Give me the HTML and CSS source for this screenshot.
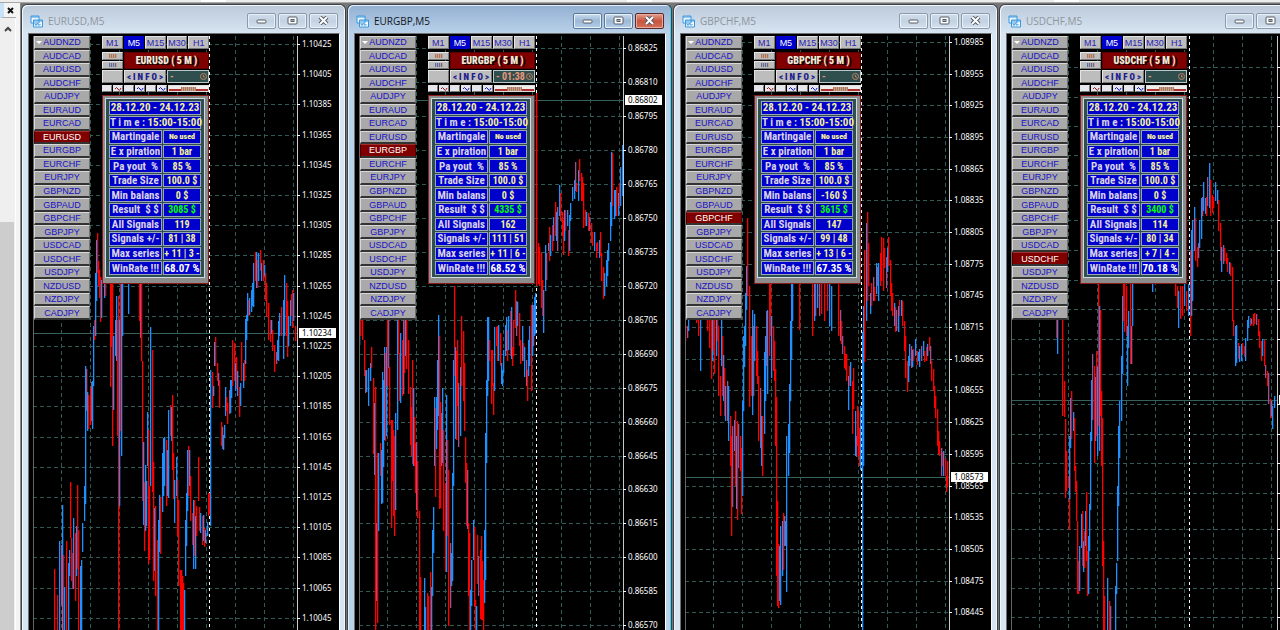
FILE: index.html
```html
<!DOCTYPE html>
<html lang="en">
<head>
    <meta charset="UTF-8" />
    <meta name="viewport" content="width=device-width, initial-scale=1.0" />
    <title>EURGBP,M5</title>
    <link rel="stylesheet" href="styles.css">
</head>
<body>
    <div class="topbar">
        <span class="tab"></span>
        <span class="tab"></span>
        <span class="tab"></span>
    </div>
    <div class="main">
        <div class="sidebar">
            <div class="sidebar-head">
                <button type="button" class="close-panel" aria-label="Close panel">
                    <svg width="7" height="7" viewBox="0 0 7 7"><path d="M1 1l5 5M6 1l-5 5" stroke="#111" stroke-width="2" /></svg>
                </button>
            </div>
            <div class="scrollbar">
                <button type="button" class="scroll-up" aria-label="Scroll up">
                    <svg width="8" height="6" viewBox="0 0 8 6"><path d="M1 5l3-3 3 3" fill="none" stroke="#444" stroke-width="2" /></svg>
                </button>
                <div class="scroll-thumb"></div>
            </div>
        </div>
        <div class="desktop" id="desktop"></div>
    </div>
    <script src="script.js"></script>
</body>
</html>
```
FILE: styles.css
```css
body {
  margin: 0;
  height: 100vh;
  overflow: hidden;
  display: flex;
  flex-direction: column;
  font-family: "Liberation Sans", Arial, sans-serif;
  background-color: #f0f0f0;
}

button {
  margin: 0;
  padding: 0;
  border: none;
  font-family: inherit;
  cursor: pointer;
}

.topbar {
  display: flex;
  justify-content: space-around;
  height: 2px;
  background-color: #ededed;
  border-bottom: 1px solid #a8a8a8;
}

.tab {
  width: 25px;
  background-color: #fff;
}

.main {
  display: flex;
  flex: 1;
  min-height: 0;
}

/* left strip */
.sidebar {
  display: flex;
  flex-direction: column;
  flex: 0 0 20px;
  background-color: #f4f4f4;
  border-right: 1px solid #8a8a8a;
}

.sidebar-head {
  display: flex;
  justify-content: flex-end;
  height: 15px;
  width: 16px;
  border-left: 4px solid #c9e2f7;
  border-bottom: 1px solid #aaa;
  box-sizing: border-box;
}

.close-panel {
  display: flex;
  align-items: center;
  margin-right: 2px;
  background: none;
}

.scrollbar {
  display: flex;
  flex-direction: column;
  flex: 1;
  width: 15px;
  border-right: 1px solid #fff;
  background-color: #efefef;
}

.scroll-up {
  height: 18px;
  background: none;
}

.scroll-thumb {
  flex: 1;
  margin: 186px 1px 0 0;
  background-color: #cdcdcd;
}

/* chart windows */
.desktop {
  display: flex;
  gap: 1px;
  flex: 1;
  min-width: 0;
  overflow: hidden;
  background-color: #777;
}

.window {
  display: flex;
  flex-direction: column;
  flex: 0 0 325px;
  box-sizing: border-box;
  margin-top: 1px;
  padding: 0 5px;
  border: 1px solid #3c4248;
  border-bottom: none;
  border-radius: 6px 6px 0 0;
  background: linear-gradient(#bccada, #d7e4f2 28px);
  box-shadow: inset 1px 1px 0 #f2f7fc, inset -1px 0 0 #f2f7fc;
}

.window.active {
  background: linear-gradient(#93b0d2, #b9d1ea 28px);
  box-shadow: inset 1px 1px 0 #e3effb, inset -1px 0 0 #38d5f2;
}

.titlebar {
  display: flex;
  align-items: center;
  flex: 0 0 28px;
  padding: 0 2px 0 3px;
  gap: 5px;
}

.titlebar h1 {
  flex: 1;
  margin: 0;
  padding-top: 4px;
  font-family: "Open Sans", "Noto Sans", sans-serif;
  font-size: 10px;
  font-weight: normal;
  color: #8e959c;
}

.window.active h1 {
  color: #10151a;
}

.title-icon {
  display: block;
  margin-top: 4px;
}

.window-buttons {
  display: flex;
  gap: 2px;
  padding-top: 3px;
}

.window-buttons button {
  display: flex;
  align-items: center;
  justify-content: center;
  width: 29px;
  height: 16px;
  border: 1px solid #8b9bab;
  border-radius: 2px;
  background: linear-gradient(#cfdcea, #c3d2e2 50%, #d3e1ef);
  box-shadow: inset 0 0 0 1px #e8f0f8;
}

.window.active .window-buttons button {
  border-color: #5b7899;
  background: linear-gradient(#cbdcee, #9bb8d6 50%, #b6d0ea);
}

.window.active .window-buttons .close {
  border-color: #5c2a26;
  background: linear-gradient(#e5a193, #c9543c 50%, #d3705a);
  box-shadow: inset 0 0 0 1px #e7ac9f;
}

.client {
  position: relative;
  flex: 1;
  min-height: 0;
  overflow: hidden;
  box-sizing: border-box;
  margin-left: 1px;
  padding: 2px 0 0 5px;
  border: 1px solid #707070;
  border-right-color: #fff;
  border-bottom: none;
  background-color: #000;
}

.chart {
  position: absolute;
  top: 2px;
  left: 4px;
  font-family: "Noto Sans", "Open Sans", sans-serif;
  font-size: 8px;
}

.overlay {
  position: relative;
  display: flex;
  gap: 12px;
}

/* symbol buttons */
.pairs {
  display: grid;
  grid-auto-rows: 1fr;
  width: 56px;
  height: 284px;
}

.pairs button {
  border: 1px solid #d8d8d8;
  border-right-color: #707070;
  border-bottom: 2px solid #333;
  background-color: #a9a9a9;
  color: #1a12c4;
  font-size: 9px;
  line-height: 10px;
}

.pairs button.selected {
  border-color: #a03030 #500000 #333;
  background-color: #800000;
  color: #fff;
}

.pairs button:first-child::before {
  content: "";
  float: left;
  margin: 4px -7px 0 1px;
  border: 3px solid transparent;
  border-top-color: #fff;
  border-bottom: none;
}

.controls {
  width: 107px;
}

.row {
  display: flex;
  gap: 1px;
}

.key {
  box-sizing: border-box;
  border: 1px solid #e4e4e4;
  border-right-color: #777;
  border-bottom-color: #777;
  background-color: #bdbdbd;
  color: #1c1c8c;
}

.timeframes {
  margin-bottom: 3px;
}

.timeframes .key {
  flex: 1 1 0;
  height: 13px;
  font-size: 9px;
  color: #2a22b8;
}

.timeframes .on {
  border-color: #0000cd;
  background-color: #0000cd;
  color: #fff;
}

.side-keys {
  display: flex;
  flex-direction: column;
  gap: 1px;
  width: 21px;
}

.side-keys .key {
  display: flex;
  align-items: center;
  justify-content: center;
  height: 8px;
}

.bars {
  display: block;
  width: 8px;
  height: 4px;
  background: repeating-linear-gradient(90deg, #c07040 0 1px, #b0a8a8 1px 2px);
}

.side-keys .key:last-child .bars {
  background: repeating-linear-gradient(90deg, #5070b0 0 1px, #c0a090 1px 2px);
}

.symbol {
  flex: 1;
  height: 17px;
  box-sizing: border-box;
  border: 1px solid #5a0000;
  background-color: #800000;
  color: #f4e8d8;
  font-family: "Roboto Condensed", Roboto, sans-serif;
  font-size: 10px;
  font-weight: 900;
  line-height: 16px;
  text-align: center;
  text-shadow: 2px 1px 0 #000;
}

.info-row {
  margin: 1px 0 2px;
}

.info-row .key {
  width: 21px;
  height: 13px;
}

.info-row .info {
  width: 42px;
  font-family: "Roboto Condensed", Roboto, sans-serif;
  font-size: 9px;
  font-weight: 900;
}

.timer {
  display: flex;
  align-items: center;
  justify-content: space-between;
  flex: 1;
  height: 13px;
  box-sizing: border-box;
  padding: 0 1px 0 2px;
  border: 1px solid #b8c8c8;
  background-color: #2f4f4f;
  color: #e9967a;
  font-family: "Roboto Condensed", Roboto, sans-serif;
  font-size: 10px;
  font-weight: bold;
}

.tools .key {
  flex: none;
  width: 10px;
  height: 7px;
  background-color: #e6e6ee;
}

.tools .key svg {
  display: block;
}

.tools .slider {
  display: flex;
  align-items: center;
  justify-content: center;
  flex: 1;
  height: 7px;
  box-sizing: border-box;
  border: 1px solid #ddd;
  background: linear-gradient(#eee 3px, #b03030 3px);
}

.tools .slider .bars {
  width: 15px;
}

/* statistics panel */
.panel {
  margin-top: 3px;
  border: 1px solid #8b1a1a;
  background-color: #8c8c8c;
  padding: 2px 3px 5px 2px;
}

.stats {
  width: 100%;
  height: 180px;
  table-layout: fixed;
  border: 1px solid #d3dbe2;
  border-spacing: 1px;
  padding: 1px 2px;
  background-color: #2f4f4f;
  font-family: "Roboto Condensed", Roboto, sans-serif;
  font-size: 10px;
  font-weight: bold;
  line-height: 11px;
  color: #f3ee9e;
}

.stats th,
.stats td {
  padding: 0;
  border: 1px solid #9aa4b8;
  background-color: #0000cd;
  text-align: center;
  white-space: nowrap;
}

.stats th {
  color: #d9d3ea;
  font-size: 11px;
}

.stats .label-col {
  width: 53px;
}

.stats .small {
  font-size: 8px;
  font-weight: 900;
}

.stats .range,
.stats .winrate {
  font-size: 11px;
}

.stats .label {
  color: #d9d3ea;
}

.stats .result {
  color: #00ff00;
}

.stats .winrate {
  color: #fff;
}
```
FILE: script.js
```js
var PAIRS = ["AUDNZD", "AUDCAD", "AUDUSD", "AUDCHF", "AUDJPY", "EURAUD", "EURCAD",
  "EURUSD", "EURGBP", "EURCHF", "EURJPY", "GBPNZD", "GBPAUD", "GBPCHF", "GBPJPY",
  "USDCAD", "USDCHF", "USDJPY", "NZDUSD", "NZDJPY", "CADJPY"];

var COLORS = { b: "#1e90ff", r: "#ff0000", p: "#a0508c" };

// bars: x, colour, top-bottom
var charts = [
  {
    pair: "EURUSD", start: 1.10425, step: 0.0002, first: 8, pitch: 30.2, count: 20,
    price: "1.10234", priceY: 297, divider: 176, timer: "",
    stats: ["0 $", "3085 $", "119", "81 | 38", "+ 11 | 3 -", "68.07 %"],
    bars: "21r533-594 24r559-594 26b505-594 28p509-569 29b469-594 30r519-594 31b551-594 33r505-594 35b527-594 36b514-540 37r446-502 38r502-545 39r517-553 40b482-553 42r497-565 43b490-540 44r449-533 45r494-594 47b530-594 48b524-594 49b487-516 51b450-485 52b330-468 53p333-375 54b356-395 55r359-393 57r352-389 58p346-385 59b345-393 60b290-350 61r284-304 62b237-300 63b204-265 64r197-237 65r225-250 66r234-262 67r241-286 68b244-282 71b244-262 72r246-260 77r248-351 78r248-310 79r248-410 80b300-374 82b284-320 83b260-325 84r284-400 85r260-594 86b284-470 87r248-395 88b248-420 89b248-300 95b248-278 106r248-285 107p248-302 108r248-325 109r325-465 110b406-489 111r446-515 112b429-495 113b445-490 114b376-430 115r394-528 116r450-524 117b291-450 119r314-456 120r426-545 121b472-535 122r470-560 124r504-594 125b484-594 126b459-516 127r461-518 129b417-476 130b402-460 131b401-450 133r404-470 134b414-460 135b374-462 137r369-400 138b371-405 139r359-434 140r417-463 141b444-487 143b421-460 144r444-500 145r464-550 147r534-594 148r534-594 149r540-594 150r547-594 151b554-594 152b484-540 153b457-510 154b414-475 155r410-460 156b414-450 157r440-485 159r477-509 160b464-533 161r464-520 162b480-533 163r470-500 165r421-465 166r471-495 167b477-497 169r480-509 170b479-505 171r492-511 172b494-507 174b486-500 175r457-480 176r457-478 177b334-490 179r336-372 180b350-360 181b306-330 182r301-330 184r327-345 185p337-350 186r344-372 188r386-410 189p391-413 190b399-414 191b389-402 192b351-380 193r361-375 194r367-388 196p354-378 197b344-377 198b344-362 199r304-350 201r307-345 202b327-355 203r321-353 204b335-360 206r351-381 207b347-370 208r306-345 210b327-352 211r324-345 212b283-328 213b279-304 214b257-285 215r264-280 216b262-279 218b254-276 219b247-270 220b227-271 222r216-245 223b216-252 224r224-252 225b217-245 227r214-235 228b227-245 230r224-245 231b229-240 232r237-265 233r247-281 235r267-304 237r284-306 238b284-298 239r294-315 241r309-336 243p316-328 244b304-324 245b285-325 246b277-300 248r271-300 250b264-323 251b239-300 253r247-300 254r265-321 255b280-310 257b264-290 258r258-280 259r254-292 260b257-285 262r290-305"
  },
  {
    pair: "EURGBP", start: 0.86825, step: 0.00015, first: 12, pitch: 33.96, count: 18,
    price: "0.86802", priceY: 64, divider: 177, timer: "01:38", active: true,
    stats: ["0 $", "4335 $", "162", "111 | 51", "+ 11 | 6 -", "68.52 %"],
    bars: "0b277-309 1r283-300 3r280-304 5r304-340 6p334-357 7b334-356 9b332-370 11b327-345 12r311-332 14r342-418 15b367-439 16r351-594 17p487-565 18r417-587 19b417-495 21r407-440 22b414-468 23b336-467 24b344-431 25b311-404 26r317-405 27b311-400 28r270-350 29p284-332 30r331-389 32r384-492 33r384-445 34r394-480 35r400-500 36b377-474 38b270-394 39r284-318 40r317-365 41b297-367 43r304-360 44p284-358 45r270-337 46b270-320 47r270-333 49r304-358 51r351-409 52r371-420 53r324-428 54b352-430 55r381-430 56r407-457 57p406-474 58r425-482 60r475-594 61r541-594 65b542-594 66b571-594 68r557-594 69r560-594 71r536-594 72b551-594 73b494-560 74b471-517 75b361-430 76r372-461 77b361-413 78b324-394 79b279-380 80r300-473 81r366-472 82p377-430 83b352-427 84r394-495 86r447-535 87b359-536 88r404-500 89r434-590 91p507-572 92b517-550 93b437-545 94b324-450 95r250-340 96b311-403 97r315-404 98r304-370 99p347-411 101b331-400 102r280-350 104r295-365 105r327-395 106r401-447 107r427-490 108p434-493 109r487-560 110r497-594 111b554-594 112b524-570 114b484-524 115r491-570 116r564-594 117b570-594 118r499-548 119p520-560 121r514-583 122r500-584 123r525-584 124r544-594 125b494-567 126b397-544 127b344-427 128b281-360 129b281-345 130r304-325 132r314-368 133r314-350 134r347-379 135b291-355 137r291-310 138r290-325 139b289-325 141r297-330 142b327-348 143b334-350 144b314-337 146b289-320 147b281-315 148r294-325 149b280-314 151r275-320 152b271-323 153r311-330 154r284-320 156r254-292 157p265-300 158b266-290 160r277-310 161r304-328 163b290-325 164r307-325 165b311-341 167p324-350 168r334-365 169b304-340 170b290-330 172r269-355 173b269-320 174p269-310 175b261-300 176b257-298 177r57-250 179r207-248 180r211-250 182r217-272 183r244-280 184b254-297 186b209-255 187p217-244 189b207-215 190r191-225 191b199-220 193r189-215 194b181-205 196r166-200 197b176-205 198p171-215 200b149-180 201r157-185 203r176-200 204r184-219 205b174-205 206r174-195 208b174-190 209r194-220 210b179-215 211b167-185 213b151-165 215b144-163 216p126-155 217r147-156 219b134-165 220r123-145 222r137-165 223r141-165 224r147-192 226r174-190 227b176-190 229r177-195 230p181-195 232r187-207 233r196-210 235b196-215 237r207-222 238r206-215 240b204-222 241r196-220 242r217-245 244r231-263 245b237-260 247b224-250 248b214-240 249b207-225 251b166-205 252b116-190 253r117-170 255b154-183 256b154-180 257r151-180 259b157-180 260r147-170 261b131-170 263b109-160"
  },
  {
    pair: "GBPCHF", start: 1.08985, step: 0.0003, first: 6, pitch: 31.68, count: 19,
    price: "1.08573", priceY: 441, divider: 176, timer: "",
    stats: ["-160 $", "3615 $", "147", "99 | 48", "+ 13 | 6 -", "67.35 %"],
    bars: "0r289-305 2p290-302 3b274-295 11r274-287 13r274-300 15b274-335 22r274-295 24r274-312 26r274-343 27b274-325 28r274-315 29r274-338 31b274-320 32r274-305 33r290-360 35r340-380 36b274-330 37r300-360 38b319-365 39r332-380 40b350-385 42p345-385 43b350-405 45r380-430 46r400-500 47p390-471 49b384-415 50r375-450 51b400-473 52r385-484 53p388-432 55r400-435 56r412-478 57b365-460 58b300-375 59b290-331 60b257-310 61b230-274 62r182-260 64r250-371 66r300-360 67b274-379 68p290-360 69b278-325 71r290-340 72r315-348 73r340-405 75p352-412 76b380-430 77r380-440 79b316-398 80b300-365 81p275-330 82b274-358 84r248-320 85r248-300 86b280-342 88r290-335 89r305-345 90r333-410 91r361-540 92r465-570 93r508-572 94b510-565 95b490-569 97b485-540 98r477-534 99p480-510 100b485-510 101b400-556 103b388-440 104b348-417 105b285-365 106b248-324 107b248-285 114r248-294 127r248-300 129b248-285 130p248-280 132b248-272 134p248-280 136r248-278 139r248-285 142r248-275 144b248-290 146b250-295 153r248-300 155p274-305 156r285-308 157p300-318 159r310-332 160r318-334 161r318-345 163b340-374 164r330-350 165b326-350 167r345-398 168r332-373 170b375-420 171p400-421 172r370-410 173r375-420 174r392-430 175b370-434 177b296-594 178b270-430 179r214-326 181b187-285 182r176-265 183r207-250 185b257-278 186r247-270 188p241-265 189r251-265 191b227-258 192p231-250 193b227-265 195r217-250 196r201-245 198r202-255 199r212-232 201p221-252 202b212-236 203r201-230 205r224-260 206r247-275 207r257-280 209b267-290 210r271-296 211p274-295 213b270-296 214r264-280 216b264-280 217r265-290 219r285-315 220r300-342 222r325-356 223b320-346 224b308-330 226p310-332 227b314-331 228r313-325 230b303-320 232r315-329 233b316-325 234b313-331 236p310-325 238b305-320 239r315-326 241r311-325 242b308-320 244r301-315 245p310-328 246r325-345 248r333-355 249r350-372 250r360-382 252r373-410 253r395-418 254r405-420 256p412-440 257r416-430 258b415-440 260r422-440 261r440-456 262r425-450"
  },
  {
    pair: "USDCHF", lines: [31, 61, 90, 119, 149, 184, 214, 244, 273, 303, 338, 368, 398, 427, 457, 493, 522, 552, 581],
    price: "", priceY: 364, divider: 178, axis: 266, timer: "",
    stats: ["0 $", "3400 $", "114", "80 | 34", "+ 7 | 4 -", "70.18 %"],
    bars: "0r49-81 45r274-302 46b274-318 51r274-380 53r345-381 54r383-462 55r415-455 57r440-452 58r415-494 58b400-463 59b362-412 60r355-403 62b376-395 63r382-435 64r430-456 65r445-485 66r485-558 67r525-558 68b510-555 70b478-512 71r475-530 72b505-536 73r495-532 74b475-510 75r456-525 76r515-560 77b500-558 78b468-515 79b396-474 80b344-405 81p318-384 83r330-427 84p341-405 85r315-400 86b331-420 87r248-390 88b270-415 89r274-380 90r355-430 91r382-530 92r505-594 93r560-594 96b542-594 98r565-594 99p570-594 104b550-594 105b527-558 106b450-525 107b390-470 108b365-422 110b320-385 111b260-338 112r248-285 113r248-296 115r250-300 116b290-350 117b275-312 119r248-328 120p290-328 121b248-290 141b248-256 164r248-260 166r250-272 167b255-292 169r250-283 171r250-280 173b248-270 175r255-275 177b248-280 179r214-300 180b194-280 181b184-265 183b171-215 184r182-225 186r211-231 187p207-222 188b184-212 190b162-203 191p161-180 192b146-175 194b162-178 195r161-180 196p141-170 198b127-172 199r144-180 201r159-177 202r161-172 204b146-165 206b154-168 207r164-195 209r187-225 210b211-236 212p209-228 213r212-225 215r217-228 216r222-236 218b226-238 219r227-240 221r231-285 222r284-300 224b290-330 225b289-327 227r307-323 228b310-326 230b308-325 231r307-318 233r310-321 234b302-325 236b284-305 237b280-292 239r282-290 240b283-288 242r278-290 243r277-288 245p278-289 247r283-300 248r295-312 250r305-325 251b303-320 253r304-330 254p329-342 256r335-350 257p337-368 259r363-382 260b365-380 261b370-393 263b360-372"
  }
];

var LABELS = ["Min balans", "Result &nbsp;$ $", "All Signals", "Signals +/-", "Max series", "WinRate !!!"];

function drawChart(c) {
  var axis = c.axis || 264;
  var s = '<svg class="chart" width="306" height="1200" viewBox="0 0 306 1200">';
  var ys = c.lines || [];
  if (!c.lines) {
    for (var i = 0; i < c.count; i++) ys.push(Math.round(c.first + c.pitch * i));
  }
  s += '<g stroke="#2f5a55" stroke-dasharray="4 3">';
  for (var x = 28; x < 264; x += 29) s += '<path d="M' + (x + 0.5) + ' 0V1200" />';
  ys.forEach(function (y) { s += '<path d="M0 ' + (y + 0.5) + 'H' + axis + '" />'; });
  s += '</g><path d="M0 ' + (c.priceY + 0.5) + 'H' + axis + '" stroke="#35605c" />';
  s += '<path d="M' + (c.divider + 0.5) + ' 0V1200" stroke="#fff" stroke-dasharray="3 3" />';

  c.bars.split(" ").forEach(function (bar) {
    var m = bar.match(/(\d+)([brp])(\d+)-(\d+)/);
    s += '<rect x="' + m[1] + '" y="' + m[3] + '" width="1.3" height="' + (m[4] - m[3]) + '" fill="' + COLORS[m[2]] + '" />';
  });

  s += '<path d="M0.5 0V1200" stroke="#666" />';
  s += '<path d="M' + (axis + 0.5) + ' 0V1200" stroke="#c8c8c8" />';
  ys.forEach(function (y, n) {
    s += '<path d="M' + axis + ' ' + (y + 0.5) + 'h3" stroke="#fff" />';
    if (!c.lines) {
      s += '<text x="269" y="' + (y + 3) + '" fill="#fff">' + (c.start - c.step * n).toFixed(5) + '</text>';
    }
  });
  s += '<rect x="' + (axis + 2) + '" y="' + (c.priceY - 5) + '" width="37" height="10" fill="#fff" />';
  s += '<text x="269" y="' + (c.priceY + 3) + '" fill="#000">' + c.price + '</text>';
  return s + '</svg>';
}

function drawPairs(c) {
  return PAIRS.map(function (p) {
    return '<button type="button"' + (p === c.pair ? ' class="selected"' : '') + '>' + p + '</button>';
  }).join("");
}

function wave(color) {
  return '<svg width="8" height="5" viewBox="0 0 8 5"><path d="M1 3q1.5-3 3 0t3-1" fill="none" stroke="' + color + '" /></svg>';
}

function drawTools() {
  return ["#a01010", "#1010d0", "#1010d0"].map(function (color) {
    return '<button type="button" class="key" aria-label="Line"></button>' +
      '<button type="button" class="key" aria-label="Wave">' + wave(color) + '</button>';
  }).join("");
}

function drawStats(c) {
  var rows = '<colgroup><col class="label-col"><col></colgroup>' +
    '<tr><td colspan="2" class="range">28.12.20 - 24.12.23</td></tr>' +
    '<tr><td colspan="2" class="range"><span class="label">T i m e :</span> 15:00-15:00</td></tr>' +
    '<tr><th>Martingale</th><td class="small">No used</td></tr>' +
    '<tr><th>E x piration</th><td>1 bar</td></tr>' +
    '<tr><th>Pa yout &nbsp;%</th><td>85 %</td></tr>' +
    '<tr><th>Trade Size</th><td>100.0 $</td></tr>';
  LABELS.forEach(function (label, i) {
    var cls = i === 1 ? ' class="result"' : i === 5 ? ' class="winrate"' : '';
    rows += '<tr><th>' + label + '</th><td' + cls + '>' + c.stats[i] + '</td></tr>';
  });
  return '<table class="stats">' + rows + '</table>';
}

function drawWindow(c) {
  return '<section class="window' + (c.active ? ' active' : '') + '">' +
    '<div class="titlebar">' +
      '<svg class="title-icon" width="13" height="13" viewBox="0 0 13 13">' +
        '<path d="M1 1h8v7h-8zM3.500 5h9v7h-9z" fill="#eef7ff" stroke="#3a98dc" />' +
        '<path d="M1 2h8M4 6h8" stroke="#3a98dc" />' +
        '<path d="M5 9l1 1.500 1.500-2 1.500 2 1.500-1.500" fill="none" stroke="#3a98dc" /></svg>' +
      '<h1>' + c.pair + ',M5</h1>' +
      '<div class="window-buttons">' +
        '<button type="button" aria-label="Minimize"><svg width="11" height="9" viewBox="0 0 11 9"><rect x="1" y="4" width="9" height="3" rx="1" fill="#fff" stroke="#555c66" /></svg></button>' +
        '<button type="button" aria-label="Maximize"><svg width="11" height="9" viewBox="0 0 11 9"><rect x="1" y="1" width="9" height="7" rx="1" fill="#fff" stroke="#555c66" /><rect x="4" y="3.500" width="3" height="2" fill="#9ab" stroke="#555c66" /></svg></button>' +
        '<button type="button" class="close" aria-label="Close"><svg width="11" height="9" viewBox="0 0 11 9"><path d="M2 1l7 7M9 1L2 8" stroke="#555c66" stroke-width="4" /><path d="M2 1l7 7M9 1L2 8" stroke="#fff" stroke-width="2" /></svg></button>' +
      '</div>' +
    '</div>' +
    '<div class="client">' + drawChart(c) +
      '<div class="overlay">' +
        '<div class="pairs">' + drawPairs(c) + '</div>' +
        '<div class="controls">' +
          '<div class="row timeframes">' +
            ["M1", "M5", "M15", "M30", "H1"].map(function (t) {
              return '<button type="button" class="key' + (t === "M5" ? ' on' : '') + '">' + t + '</button>';
            }).join("") +
          '</div>' +
          '<div class="row">' +
            '<div class="side-keys"><button type="button" class="key" aria-label="Sell bars"><span class="bars"></span></button>' +
            '<button type="button" class="key" aria-label="Buy bars"><span class="bars"></span></button></div>' +
            '<div class="symbol">' + c.pair + ' ( 5 M )</div>' +
          '</div>' +
          '<div class="row info-row">' +
            '<button type="button" class="key" aria-label="Blank"></button>' +
            '<button type="button" class="key info">&lt; I N F O &gt;</button>' +
            '<div class="timer"><span>- ' + c.timer + '</span>' +
              '<svg width="7" height="7" viewBox="0 0 7 7"><circle cx="3.500" cy="3.500" r="3" fill="none" stroke="#c08060" /><path d="M3.500 2v2h1.500" fill="none" stroke="#c08060" /></svg></div>' +
          '</div>' +
          '<div class="row tools">' + drawTools() + '<div class="slider"><span class="bars"></span></div></div>' +
          '<div class="panel">' + drawStats(c) + '</div>' +
        '</div>' +
      '</div>' +
    '</div>' +
  '</section>';
}

document.getElementById("desktop").innerHTML = charts.map(drawWindow).join("");
```
